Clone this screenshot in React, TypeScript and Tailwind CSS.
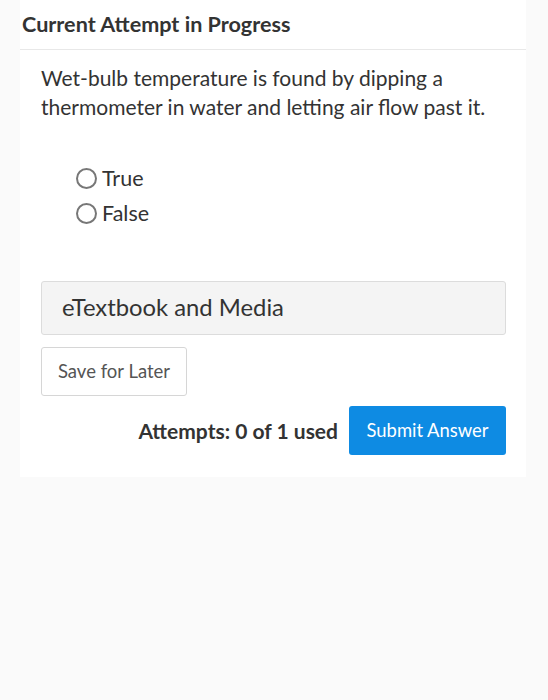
export default function App() {
  return (
    <div className="min-h-[700px] bg-[#fafafa] font-['Lato','Liberation_Sans',sans-serif] text-[#2d3b45]">
      <div className="ml-[20px] w-[506px] bg-white">
        {/* Header */}
        <div className="px-[2px] pt-[11px] pb-[11px] border-b border-[#e8e8e8]">
          <h2 className="text-[21.6px] leading-[27px] font-bold text-[#333]">Current Attempt in Progress</h2>
        </div>

        <div className="pl-[21px] pr-[20px] pt-[13px] pb-[22px]">
          <p className="text-[21px] leading-[29px] text-[#333]">
            Wet-bulb temperature is found by dipping a thermometer in water and letting air flow past it.
          </p>

          {/* Options */}
          <div className="mt-[46px] ml-[35px] flex flex-col gap-[12px]">
            {['True', 'False'].map((label) => (
              <label key={label} className="flex items-center gap-[5px] text-[21.5px] leading-[23px] text-[#333]">
                <span className="w-[21px] h-[21px] rounded-full border-2 border-[#777] bg-white" />
                {label}
              </label>
            ))}
          </div>

          {/* eTextbook */}
          <div className="mt-[56px] h-[54px] flex items-center px-[20px] bg-[#f4f4f4] border border-[#dcdcdc] rounded-[3px] text-[23.8px] text-[#333]">
            eTextbook and Media
          </div>

          <button className="mt-[12px] h-[49px] w-[146px] bg-white border border-[#d6d6d6] rounded-[3px] text-[18.5px] text-[#555]">
            Save for Later
          </button>

          <div className="mt-[10px] flex items-center justify-end gap-[11px]">
            <span className="text-[21px] font-bold text-[#333]">Attempts: 0 of 1 used</span>
            <button className="h-[49px] w-[157px] bg-[#0e8be3] rounded-[3px] text-[18.4px] text-white">
              Submit Answer
            </button>
          </div>
        </div>
      </div>
    </div>
  );
}
